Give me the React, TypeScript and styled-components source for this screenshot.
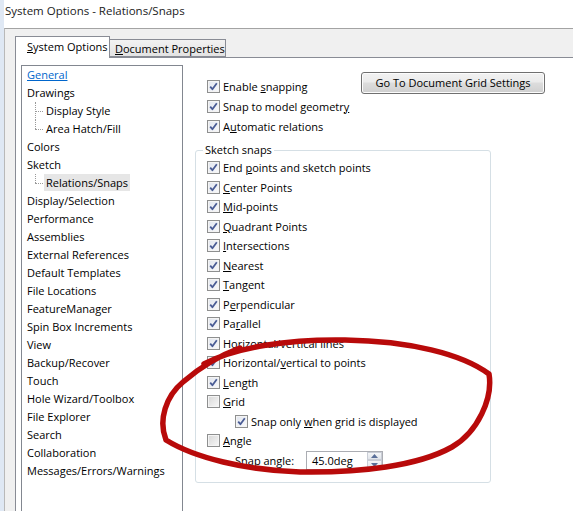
import React from 'react'
import styled, { createGlobalStyle } from 'styled-components'

const GlobalStyle = createGlobalStyle`
  html, body {
    margin: 0;
    padding: 0;
    background: #fff;
    overflow: hidden;
  }
  body {
    font-family: 'Open Sans', 'Noto Sans', sans-serif;
    font-size: 11px;
    color: #000;
  }
`

type Item = { pre?: string; key?: string; post?: string; checked: boolean; sub?: boolean }

const topOptions: Item[] = [
  { pre: 'Enable ', key: 's', post: 'napping', checked: true },
  { pre: 'Snap to model geometr', key: 'y', post: '', checked: true },
  { pre: 'A', key: 'u', post: 'tomatic relations', checked: true }
]

const snaps: Item[] = [
  { pre: 'End ', key: 'p', post: 'oints and sketch points', checked: true },
  { key: 'C', post: 'enter Points', checked: true },
  { key: 'M', post: 'id-points', checked: true },
  { key: 'Q', post: 'uadrant Points', checked: true },
  { key: 'I', post: 'ntersections', checked: true },
  { key: 'N', post: 'earest', checked: true },
  { key: 'T', post: 'angent', checked: true },
  { pre: 'P', key: 'e', post: 'rpendicular', checked: true },
  { pre: 'Pa', key: 'r', post: 'allel', checked: true },
  { pre: 'Hori', key: 'z', post: 'ontal/vertical lines', checked: true },
  { pre: 'Horizontal/', key: 'v', post: 'ertical to points', checked: true },
  { key: 'L', post: 'ength', checked: true },
  { key: 'G', post: 'rid', checked: false },
  { pre: 'Snap only ', key: 'w', post: 'hen grid is displayed', checked: true, sub: true },
  { key: 'A', post: 'ngle', checked: false }
]

const tree: { label: string; level: number; last?: boolean; link?: boolean; selected?: boolean }[] = [
  { label: 'General', level: 0, link: true },
  { label: 'Drawings', level: 0 },
  { label: 'Display Style', level: 1 },
  { label: 'Area Hatch/Fill', level: 1, last: true },
  { label: 'Colors', level: 0 },
  { label: 'Sketch', level: 0 },
  { label: 'Relations/Snaps', level: 1, last: true, selected: true },
  { label: 'Display/Selection', level: 0 },
  { label: 'Performance', level: 0 },
  { label: 'Assemblies', level: 0 },
  { label: 'External References', level: 0 },
  { label: 'Default Templates', level: 0 },
  { label: 'File Locations', level: 0 },
  { label: 'FeatureManager', level: 0 },
  { label: 'Spin Box Increments', level: 0 },
  { label: 'View', level: 0 },
  { label: 'Backup/Recover', level: 0 },
  { label: 'Touch', level: 0 },
  { label: 'Hole Wizard/Toolbox', level: 0 },
  { label: 'File Explorer', level: 0 },
  { label: 'Search', level: 0 },
  { label: 'Collaboration', level: 0 },
  { label: 'Messages/Errors/Warnings', level: 0 }
]

function CheckBox({ checked }: { checked: boolean }) {
  return (
    <Box $checked={checked}>
      {checked && (
        <svg width="11" height="11" viewBox="0 0 11 11">
          <path
            d="M2.2 5.6 L4.4 8.2 L8.8 2.2"
            fill="none"
            stroke="#4a5c95"
            strokeWidth="1.8"
            strokeLinejoin="round"
          />
        </svg>
      )}
    </Box>
  )
}

function Label({ item }: { item: Item }) {
  return (
    <span>
      {item.pre}
      {item.key && <Key>{item.key}</Key>}
      {item.post}
    </span>
  )
}

export default function App() {
  return (
    <Window>
      <GlobalStyle />
      <TitleBar>System Options - Relations/Snaps</TitleBar>
      <DialogBody>
        <TabStrip>
          <ActiveTab>
            <Key>S</Key>ystem Options
          </ActiveTab>
          <InactiveTab>
            <Key>D</Key>ocument Properties
          </InactiveTab>
        </TabStrip>
        <TabPanel>
          <Tree>
            {tree.map((t) =>
              t.level === 0 ? (
                <TreeRow key={t.label} $link={t.link}>
                  {t.label}
                </TreeRow>
              ) : (
                <ChildRow key={t.label} $last={t.last}>
                  <ChildLabel $selected={t.selected}>{t.label}</ChildLabel>
                </ChildRow>
              )
            )}
          </Tree>
          <RightColumn>
            <TopArea>
              <TopOptions>
                {topOptions.map((o, i) => (
                  <TopRow key={i}>
                    <CheckBox checked={o.checked} />
                    <Label item={o} />
                  </TopRow>
                ))}
              </TopOptions>
              <Button>Go To Document Grid Settings</Button>
            </TopArea>
            <GroupBox>
              <Legend>Sketch snaps</Legend>
              {snaps.map((s, i) => (
                <SnapRow key={i} $sub={s.sub}>
                  <CheckBox checked={s.checked} />
                  <Label item={s} />
                </SnapRow>
              ))}
              <SpinRow>
                <SpinLabel>Snap angle:</SpinLabel>
                <SpinBox>
                  <SpinValue>45.0deg</SpinValue>
                  <SpinButtons>
                    <SpinButton>
                      <svg width="7" height="4" viewBox="0 0 7 4">
                        <path d="M0 4 L3.5 0 L7 4 Z" fill="#5a6f99" />
                      </svg>
                    </SpinButton>
                    <SpinButton>
                      <svg width="7" height="4" viewBox="0 0 7 4">
                        <path d="M0 0 L3.5 4 L7 0 Z" fill="#5a6f99" />
                      </svg>
                    </SpinButton>
                  </SpinButtons>
                </SpinBox>
              </SpinRow>
            </GroupBox>
          </RightColumn>
        </TabPanel>
      </DialogBody>
      <Annotation viewBox="0 0 573 511" width="573" height="511">
        <path
          d="M204 364 C235 347 290 339 345 340 C410 341 462 354 489 374 C493 398 478 432 452 447 C418 466 360 473 300 472 C245 470 195 458 166 440 C158 420 166 396 183 382 C198 369 218 356 240 348"
          fill="none"
          stroke="#b80a0a"
          strokeWidth="5.5"
          strokeLinecap="round"
          strokeLinejoin="round"
        />
      </Annotation>
    </Window>
  )
}

const Window = styled.div`
  position: relative;
  width: 573px;
  height: 511px;
  box-sizing: border-box;
  border-left: 4px solid #dfe8f4;
  display: flex;
  flex-direction: column;
  overflow: hidden;
  background: #fff;
`

const TitleBar = styled.div`
  height: 28px;
  padding: 2px 0 0 1px;
  box-sizing: border-box;
  font-size: 11.5px;
  line-height: 18px;
  color: #1a1a1a;
  white-space: nowrap;
`

const DialogBody = styled.div`
  flex: 1;
  display: flex;
  flex-direction: column;
  background: #f0f0f0;
  border-top: 1px solid #a3a3a3;
  border-left: 1px solid #b9b9b9;
  padding: 8px 0 0 10px;
  min-height: 0;
`

const TabStrip = styled.div`
  display: flex;
  align-items: flex-end;
  height: 21px;
  margin-bottom: -1px;
  position: relative;
  z-index: 1;
`

const ActiveTab = styled.div`
  width: 95px;
  height: 22px;
  box-sizing: border-box;
  background: #fff;
  border: 1px solid #898c95;
  border-bottom: none;
  padding: 1px 0 0 11px;
  line-height: 18px;
  white-space: nowrap;
`

const InactiveTab = styled.div`
  width: 116px;
  height: 18px;
  margin-bottom: 1px;
  box-sizing: border-box;
  background: linear-gradient(#f2f2f2, #e3e3e3);
  border: 1px solid #898c95;
  border-left: none;
  padding-left: 5px;
  line-height: 17px;
  white-space: nowrap;
  overflow: hidden;
`

const TabPanel = styled.div`
  flex: 1;
  display: flex;
  gap: 12px;
  background: #fff;
  border-top: 1px solid #898c95;
  border-left: 1px solid #898c95;
  padding: 7px 0 0 5px;
  min-height: 0;
`

const Tree = styled.div`
  width: 162px;
  flex-shrink: 0;
  box-sizing: border-box;
  border: 1px solid #828790;
  border-bottom: none;
`

const TreeRow = styled.div<{ $link?: boolean }>`
  height: 18px;
  line-height: 18px;
  padding-left: 5px;
  white-space: nowrap;
  color: ${(p) => (p.$link ? '#0066cc' : '#000')};
  text-decoration: ${(p) => (p.$link ? 'underline' : 'none')};
`

const ChildRow = styled.div<{ $last?: boolean }>`
  position: relative;
  height: 18px;
  padding-left: 22px;
  white-space: nowrap;

  &::before {
    content: '';
    position: absolute;
    left: 13px;
    top: 9px;
    width: 8px;
    border-top: 1px dotted #9a9a9a;
  }

  &::after {
    content: '';
    position: absolute;
    left: 13px;
    top: 0;
    height: ${(p) => (p.$last ? '9px' : '18px')};
    border-left: 1px dotted #9a9a9a;
  }
`

const ChildLabel = styled.span<{ $selected?: boolean }>`
  display: inline-block;
  height: 17px;
  line-height: 18px;
  padding: 0 2px;
  background: ${(p) => (p.$selected ? '#e6e6e6' : 'transparent')};
`

const RightColumn = styled.div`
  display: flex;
  flex-direction: column;
  padding-top: 11px;
`

const TopArea = styled.div`
  display: flex;
  align-items: flex-start;
`

const TopOptions = styled.div`
  width: 166px;
  box-sizing: border-box;
  padding-left: 12px;
`

const TopRow = styled.div`
  height: 20px;
  display: flex;
  align-items: center;
  gap: 3px;
  white-space: nowrap;
`

const Button = styled.div`
  width: 184px;
  height: 22px;
  margin-top: -4px;
  flex-shrink: 0;
  box-sizing: border-box;
  border: 1px solid #707070;
  border-radius: 3px;
  background: linear-gradient(#f2f2f2 0%, #ebebeb 45%, #dddddd 50%, #cfcfcf 100%);
  box-shadow: inset 0 0 0 1px #fcfcfc;
  text-align: center;
  line-height: 19px;
  white-space: nowrap;
`

const GroupBox = styled.fieldset`
  width: 296px;
  box-sizing: border-box;
  margin: 6px 0 0 0;
  padding: 0 0 12px 11px;
  border: 1px solid #d5dfe5;
  border-radius: 3px;
`

const Legend = styled.legend`
  margin-left: -4px;
  padding: 0 2px;
  line-height: 16px;
`

const SnapRow = styled.div<{ $sub?: boolean }>`
  height: 19.5px;
  display: flex;
  align-items: center;
  gap: 3px;
  padding-left: ${(p) => (p.$sub ? '28px' : '0')};
  white-space: nowrap;
`

const SpinRow = styled.div`
  height: 19.5px;
  display: flex;
  align-items: center;
  padding-left: 28px;
`

const SpinLabel = styled.span`
  width: 71px;
`

const SpinBox = styled.div`
  width: 77px;
  height: 19px;
  box-sizing: border-box;
  border: 1px solid #abadb3;
  display: flex;
  align-items: center;
  justify-content: space-between;
`

const SpinValue = styled.span`
  padding-left: 5px;
`

const SpinButtons = styled.div`
  width: 15px;
  height: 17px;
  display: flex;
  flex-direction: column;
`

const SpinButton = styled.div`
  flex: 1;
  display: flex;
  align-items: center;
  justify-content: center;
  box-sizing: border-box;
  border: 1px solid #c9cdd6;
  background: linear-gradient(#f5f6f8, #e0e4ea);
`

const Box = styled.span<{ $checked: boolean }>`
  width: 13px;
  height: 13px;
  flex-shrink: 0;
  box-sizing: border-box;
  border: 1px solid #8e8f8f;
  display: flex;
  align-items: center;
  justify-content: center;
  background: ${(p) =>
    p.$checked
      ? 'linear-gradient(135deg, #e0e5ee, #f9f9fb)'
      : 'linear-gradient(135deg, #d6d6d6, #f8f8f8)'};
  box-shadow: inset 0 0 0 1px #f4f4f4;
`

const Key = styled.u`
  text-decoration: underline;
  text-underline-offset: 1px;
`

const Annotation = styled.svg`
  position: absolute;
  left: -4px;
  top: 0;
  pointer-events: none;
`
